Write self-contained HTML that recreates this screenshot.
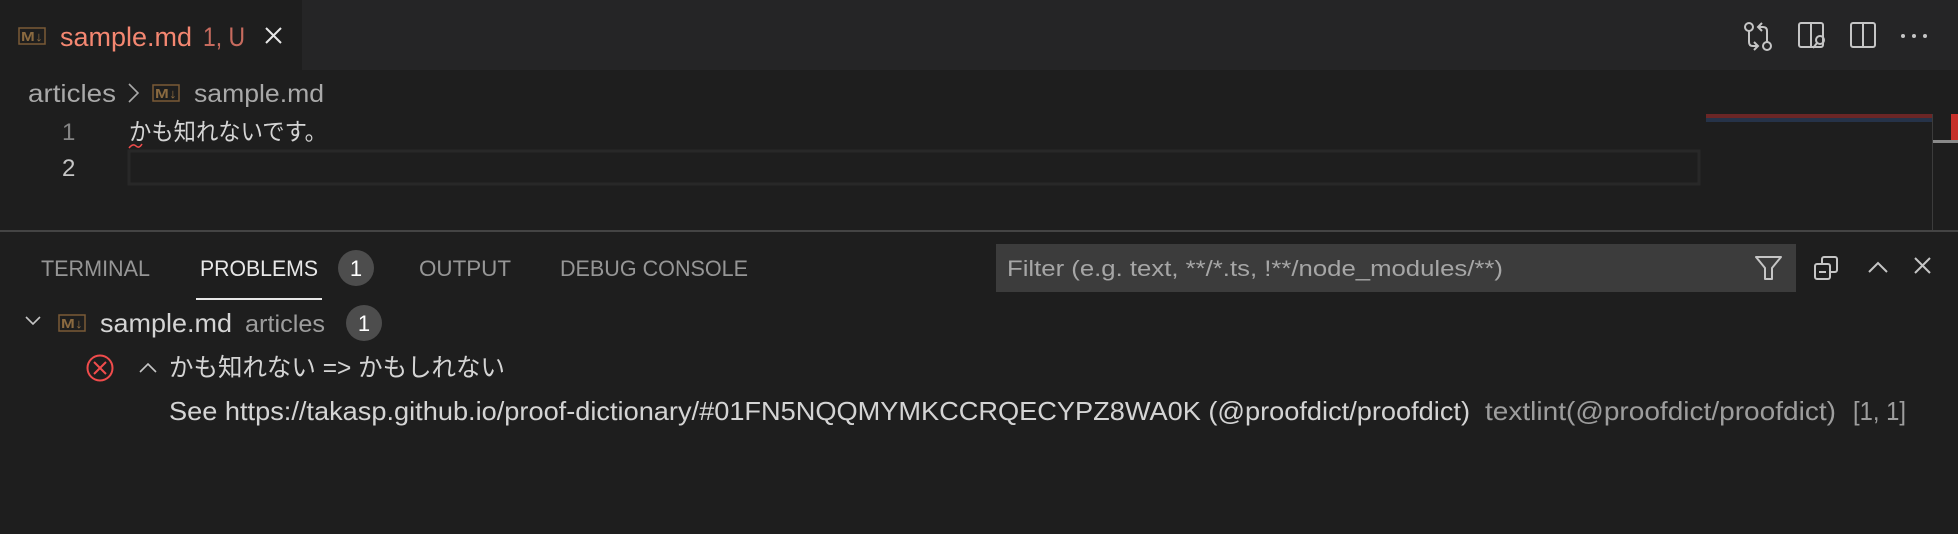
<!DOCTYPE html>
<html><head><meta charset="utf-8"><style>
html,body{margin:0;padding:0;background:#1e1e1e;width:1958px;height:534px;overflow:hidden}
svg{display:block}
text{font-family:"Liberation Sans","Noto Sans CJK JP",sans-serif}
</style></head><body>
<svg width="1958" height="534" viewBox="0 0 1958 534" xmlns="http://www.w3.org/2000/svg">
<rect width="1958" height="534" fill="#1e1e1e"/>
<rect x="0" y="0" width="1958" height="70" fill="#252526"/>
<rect x="0" y="0" width="302" height="70" fill="#1e1e1e"/>
<rect x="19" y="28" width="26" height="16" fill="none" stroke="#7a5a36" stroke-width="1.5"/>
<text x="21" y="41" font-size="13" font-weight="bold" fill="#8a6a40" textLength="22" lengthAdjust="spacingAndGlyphs">M↓</text>
<text x="60" y="46" font-size="27" fill="#f48771" textLength="132" lengthAdjust="spacingAndGlyphs">sample.md</text>
<text x="203" y="46" font-size="27" fill="#c76b5e" textLength="42" lengthAdjust="spacingAndGlyphs">1, U</text>
<path d="M266 28 L281 43 M281 28 L266 43" stroke="#e8e8e8" stroke-width="2"/>
<g stroke="#c5c5c5" stroke-width="2" fill="none">
<circle cx="1749" cy="27" r="4"/><path d="M1749 31 V42 Q1749 46 1753 46 H1757 M1754 42 L1758 46 L1754 50"/>
<circle cx="1767" cy="46" r="4"/><path d="M1767 42 V31 Q1767 27 1763 27 H1759 M1762 23 L1758 27 L1762 31"/>
<rect x="1799" y="23" width="24" height="24" rx="2"/><path d="M1811 23 V47"/><circle cx="1820" cy="40" r="4"/><path d="M1817 43 L1813 48"/>
<rect x="1851" y="23" width="24" height="24" rx="2"/><path d="M1863 23 V47"/>
</g>
<g fill="#c5c5c5"><circle cx="1903" cy="36" r="2"/><circle cx="1914" cy="36" r="2"/><circle cx="1925" cy="36" r="2"/></g>
<text x="28" y="102" font-size="25" fill="#a9a9a9" textLength="88" lengthAdjust="spacingAndGlyphs">articles</text>
<path d="M129 84 L138 93 L129 102" stroke="#a9a9a9" stroke-width="1.6" fill="none"/>
<rect x="153" y="85" width="26" height="16" fill="none" stroke="#7a5a36" stroke-width="1.5"/>
<text x="155" y="98" font-size="13" font-weight="bold" fill="#8a6a40" textLength="22" lengthAdjust="spacingAndGlyphs">M↓</text>
<text x="194" y="102" font-size="25" fill="#a9a9a9" textLength="130" lengthAdjust="spacingAndGlyphs">sample.md</text>
<text x="62" y="140" font-size="24" fill="#858585">1</text>
<text x="62" y="176" font-size="24" fill="#c6c6c6">2</text>
<text x="129" y="140" font-size="24" fill="#d4d4d4" textLength="198" lengthAdjust="spacingAndGlyphs">かも知れないです。</text>
<path d="M129 148 Q133 143 136 146 Q139 149 142 144" stroke="#f14c4c" stroke-width="1.5" fill="none"/>
<rect x="129" y="151" width="1570" height="33" fill="none" stroke="#282828" stroke-width="3"/>
<rect x="1706" y="114" width="226" height="4" fill="#6b2626"/>
<rect x="1706" y="118" width="226" height="4" fill="#263349"/>
<rect x="1932" y="114" width="1" height="116" fill="#3c3c3c"/>
<rect x="1951" y="114" width="7" height="26" fill="#c6302a"/>
<rect x="1933" y="140" width="25" height="3" fill="#8a8a8a"/>
<rect x="0" y="230" width="1958" height="2" fill="#444"/>
<text x="41" y="276" font-size="22" fill="#969696" textLength="109" lengthAdjust="spacingAndGlyphs">TERMINAL</text>
<text x="200" y="276" font-size="22" fill="#e7e7e7" textLength="118" lengthAdjust="spacingAndGlyphs">PROBLEMS</text>
<circle cx="356" cy="268" r="18" fill="#4d4d4d"/>
<text x="356" y="276" font-size="22" fill="#fff" text-anchor="middle">1</text>
<text x="419" y="276" font-size="22" fill="#969696" textLength="92" lengthAdjust="spacingAndGlyphs">OUTPUT</text>
<text x="560" y="276" font-size="22" fill="#969696" textLength="188" lengthAdjust="spacingAndGlyphs">DEBUG CONSOLE</text>
<rect x="196" y="298" width="126" height="2" fill="#e7e7e7"/>
<rect x="996" y="244" width="800" height="48" fill="#3c3c3c"/>
<text x="1007" y="276" font-size="22" fill="#a6a6a6" textLength="496" lengthAdjust="spacingAndGlyphs">Filter (e.g. text, **/*.ts, !**/node_modules/**)</text>
<path d="M1756 257 H1781 L1772 268 V279 H1765 V268 Z" stroke="#c5c5c5" stroke-width="2" fill="none" stroke-linejoin="round"/>
<g stroke="#c5c5c5" stroke-width="2" fill="none">
<rect x="1822" y="257" width="15" height="15" rx="2"/>
<rect x="1815" y="264" width="15" height="15" rx="2" fill="#1e1e1e"/>
<path d="M1819 272 H1826"/>
<path d="M1869 272 L1878 263 L1887 272"/>
<path d="M1915 258 L1930 273 M1930 258 L1915 273"/>
</g>
<path d="M26 317 L33 324 L40 317" stroke="#c5c5c5" stroke-width="1.6" fill="none"/>
<rect x="59" y="315" width="26" height="16" fill="none" stroke="#7a5a36" stroke-width="1.5"/>
<text x="61" y="328" font-size="13" font-weight="bold" fill="#8a6a40" textLength="22" lengthAdjust="spacingAndGlyphs">M↓</text>
<text x="100" y="332" font-size="26" fill="#d4d4d4" textLength="132" lengthAdjust="spacingAndGlyphs">sample.md</text>
<text x="245" y="332" font-size="24" fill="#9d9d9d" textLength="80" lengthAdjust="spacingAndGlyphs">articles</text>
<circle cx="364" cy="323" r="18" fill="#4d4d4d"/>
<text x="364" y="331" font-size="22" fill="#fff" text-anchor="middle">1</text>
<circle cx="100" cy="368" r="12.5" fill="none" stroke="#f14c4c" stroke-width="2"/>
<path d="M94 362 L106 374 M106 362 L94 374" stroke="#f14c4c" stroke-width="2"/>
<path d="M140 372 L148 364 L156 372" stroke="#c5c5c5" stroke-width="1.6" fill="none"/>
<text x="169" y="376" font-size="25" fill="#d4d4d4" textLength="336" lengthAdjust="spacingAndGlyphs">かも知れない =&gt; かもしれない</text>
<text x="169" y="420" font-size="26" fill="#d4d4d4" textLength="1301" lengthAdjust="spacingAndGlyphs">See https://takasp.github.io/proof-dictionary/#01FN5NQQMYMKCCRQECYPZ8WA0K (@proofdict/proofdict)</text>
<text x="1485" y="420" font-size="26" fill="#9d9d9d" textLength="351" lengthAdjust="spacingAndGlyphs">textlint(@proofdict/proofdict)</text>
<text x="1853" y="420" font-size="26" fill="#9d9d9d" textLength="53" lengthAdjust="spacingAndGlyphs">[1, 1]</text>
</svg>
</body></html>
